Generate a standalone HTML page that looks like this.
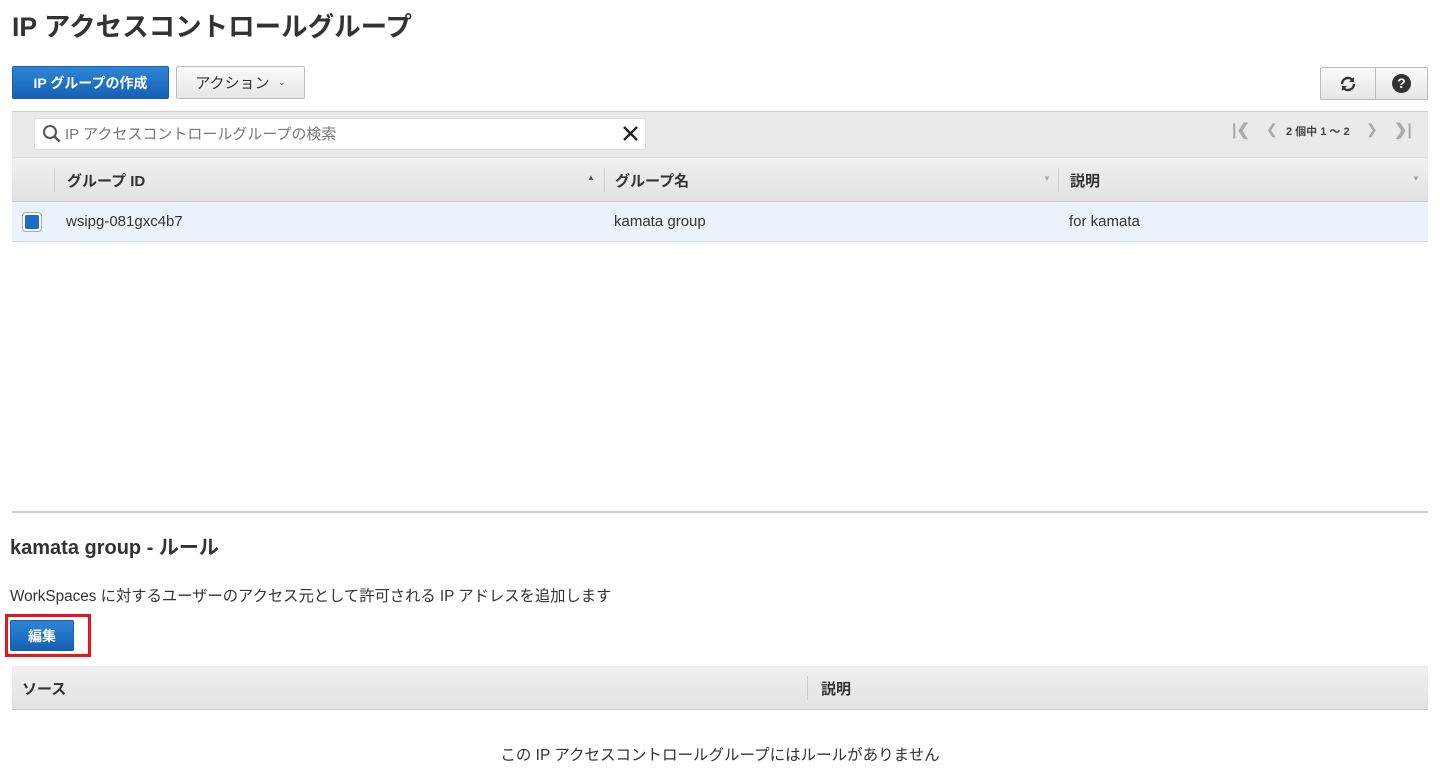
<!DOCTYPE html>
<html><head><meta charset="utf-8"><style>
*{box-sizing:border-box;margin:0;padding:0}
body{width:1440px;height:781px;background:#fff;font-family:"Liberation Sans","Noto Sans CJK JP",sans-serif;color:#333;position:relative;overflow:hidden;font-size:15px}
.a{position:absolute}
.btnb{background:linear-gradient(#2e86d6,#1560b4);border:1px solid #175fa8;border-radius:2px;color:#fff;font-weight:bold;font-size:14px;display:flex;align-items:center;justify-content:center}
.btng{background:linear-gradient(#fafafa,#e6e6e6);border:1px solid #bbb;border-radius:2px;display:flex;align-items:center;justify-content:center}
.hdr{background:linear-gradient(#f0f0f0,#e2e2e2);}
</style></head><body>
<div class="a" style="left:12px;top:5px;font-size:26.5px;font-weight:bold;color:#333">IP アクセスコントロールグループ</div>
<div class="a btnb" style="left:12px;top:66px;width:157px;height:33px">IP グループの作成</div>
<div class="a btng" style="left:176px;top:66px;width:129px;height:33px;font-size:15px">アクション&nbsp;&nbsp;<span style="font-size:9px;color:#666">&#8964;</span></div>
<div class="a btng" style="left:1320px;top:67px;width:56px;height:33px;border-radius:2px 0 0 2px">
<svg width="20" height="20" viewBox="0 0 20 20"><path d="M4 10a6 6 0 0 1 10.5-4" fill="none" stroke="#333" stroke-width="2.4"/><path d="M16 3v5h-5z" fill="#333"/><path d="M16 10a6 6 0 0 1-10.5 4" fill="none" stroke="#333" stroke-width="2.4"/><path d="M4 17v-5h5z" fill="#333"/></svg></div>
<div class="a btng" style="left:1375px;top:67px;width:53px;height:33px;border-radius:0 2px 2px 0"><div style="width:19px;height:19px;border-radius:50%;background:#333;color:#fff;font-weight:bold;font-size:14px;text-align:center;line-height:19px">?</div></div>
<div class="a hdr" style="left:12px;top:111px;width:1416px;height:46px;border-top:1px solid #ccc;background:#eaeaea"></div>
<div class="a" style="left:34px;top:118px;width:612px;height:32px;background:#fff;border:1px solid #ddd;border-radius:3px"></div>
<svg class="a" style="left:42px;top:124px" width="20" height="20" viewBox="0 0 20 20"><circle cx="8" cy="8" r="6" fill="none" stroke="#555" stroke-width="2"/><path d="M12.5 12.5l5 5" stroke="#555" stroke-width="2.6"/></svg>
<div class="a" style="left:65px;top:123px;font-size:15px;color:#777">IP アクセスコントロールグループの検索</div>
<svg class="a" style="left:623px;top:126px" width="15" height="15" viewBox="0 0 15 15"><path d="M1 1l13 13M14 1L1 14" stroke="#222" stroke-width="2.4"/></svg>
<div class="a" style="left:1232px;top:120px;font-size:16px;color:#aaa;font-weight:bold">|&#10094;</div>
<div class="a" style="left:1266px;top:121px;font-size:14px;color:#aaa">&#10094;</div>
<div class="a" style="left:1286px;top:123px;font-size:11px;color:#444;font-weight:bold">2 個中 1 ～ 2</div>
<div class="a" style="left:1366px;top:121px;font-size:14px;color:#aaa">&#10095;</div>
<div class="a" style="left:1394px;top:120px;font-size:16px;color:#aaa;font-weight:bold">&#10095;|</div>
<div class="a hdr" style="left:12px;top:157px;width:1416px;height:45px;border-top:1px solid #ddd;border-bottom:1px solid #ccc"></div>
<div class="a" style="left:54px;top:168px;width:1px;height:24px;background:#ccc"></div>
<div class="a" style="left:604px;top:168px;width:1px;height:24px;background:#ccc"></div>
<div class="a" style="left:1058px;top:168px;width:1px;height:24px;background:#ccc"></div>
<div class="a" style="left:67px;top:170px;font-weight:bold;font-size:15px">グループ ID</div>
<div class="a" style="left:587px;top:173px;font-size:8px;color:#555">▲</div>
<div class="a" style="left:615px;top:170px;font-weight:bold;font-size:15px">グループ名</div>
<div class="a" style="left:1043px;top:174px;font-size:8px;color:#aaa">▼</div>
<div class="a" style="left:1070px;top:170px;font-weight:bold;font-size:15px">説明</div>
<div class="a" style="left:1412px;top:174px;font-size:8px;color:#aaa">▼</div>
<div class="a" style="left:12px;top:202px;width:1416px;height:40px;background:#eaf2fb;border-bottom:1px solid #d5dfea"></div>
<div class="a" style="left:22px;top:212px;width:20px;height:20px;border:1px solid #aaa;border-radius:4px;background:#fff"><div style="margin:2px;width:14px;height:14px;background:#1c6dc8;border-radius:2px"></div></div>
<div class="a" style="left:66px;top:213px">wsipg-081gxc4b7</div>
<div class="a" style="left:614px;top:213px">kamata group</div>
<div class="a" style="left:1069px;top:213px">for kamata</div>
<div class="a" style="left:12px;top:511px;width:1416px;height:2px;background:#ccc"></div>
<div class="a" style="left:10px;top:531px;font-size:20px;font-weight:bold">kamata group - ルール</div>
<div class="a" style="left:10px;top:584px;font-size:15.3px">WorkSpaces に対するユーザーのアクセス元として許可される IP アドレスを追加します</div>
<div class="a" style="left:5px;top:614px;width:86px;height:43px;border:3px solid #e8141f"></div>
<div class="a btnb" style="left:10px;top:620px;width:64px;height:31px">編集</div>
<div class="a hdr" style="left:12px;top:666px;width:1416px;height:44px;border-bottom:1px solid #ccc"></div>
<div class="a" style="left:807px;top:676px;width:1px;height:24px;background:#ccc"></div>
<div class="a" style="left:22px;top:678px;font-weight:bold;font-size:15px">ソース</div>
<div class="a" style="left:821px;top:678px;font-weight:bold;font-size:15px">説明</div>
<div class="a" style="left:0;width:1440px;top:743px;text-align:center;font-size:15.5px">この IP アクセスコントロールグループにはルールがありません</div>
</body></html>
